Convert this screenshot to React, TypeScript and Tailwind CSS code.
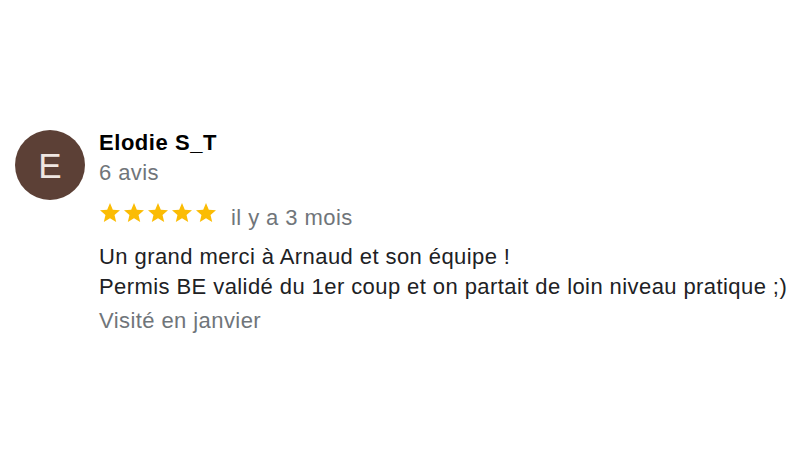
export default function App() {
  const Star = () => (
    <svg viewBox="0 0 24 24" className="w-[24px] h-[24px]" fill="#fbbc04">
      <path d="M12 17.27L18.18 21l-1.64-7.03L22 9.24l-7.19-.61L12 2 9.19 8.63 2 9.24l5.46 4.73L5.82 21z" />
    </svg>
  );

  return (
    <main className="w-[800px] h-[450px] bg-white font-['Liberation_Sans',Arial,sans-serif] flex items-start pt-[128px] pl-[15px]">
      {/* Avatar */}
      <div className="mt-[2px] w-[70px] h-[70px] rounded-full bg-[#5c4036] flex items-center justify-center text-[#efe6e1] text-[35px] leading-none shrink-0">
        E
      </div>

      {/* Avis */}
      <div className="ml-[14px] flex flex-col text-[22px] leading-[30px] tracking-[0.42px]">
        <div className="font-bold text-[#000] tracking-[0.55px]">Elodie S_T</div>
        <div className="text-[#70757a]">6 avis</div>
        <div className="flex items-start mt-[15px]">
          <div className="flex -mt-[2px] -ml-[1px]">
            {[0, 1, 2, 3, 4].map((i) => (
              <Star key={i} />
            ))}
          </div>
          <span className="ml-[13px] text-[#70757a]">il y a 3 mois</span>
        </div>
        <div className="mt-[9px] text-[#202124]">
          <div>Un grand merci à Arnaud et son équipe !</div>
          <div>Permis BE validé du 1er coup et on partait de loin niveau pratique ;)</div>
        </div>
        <div className="mt-[4px] text-[#70757a]">Visité en janvier</div>
      </div>
    </main>
  );
}
